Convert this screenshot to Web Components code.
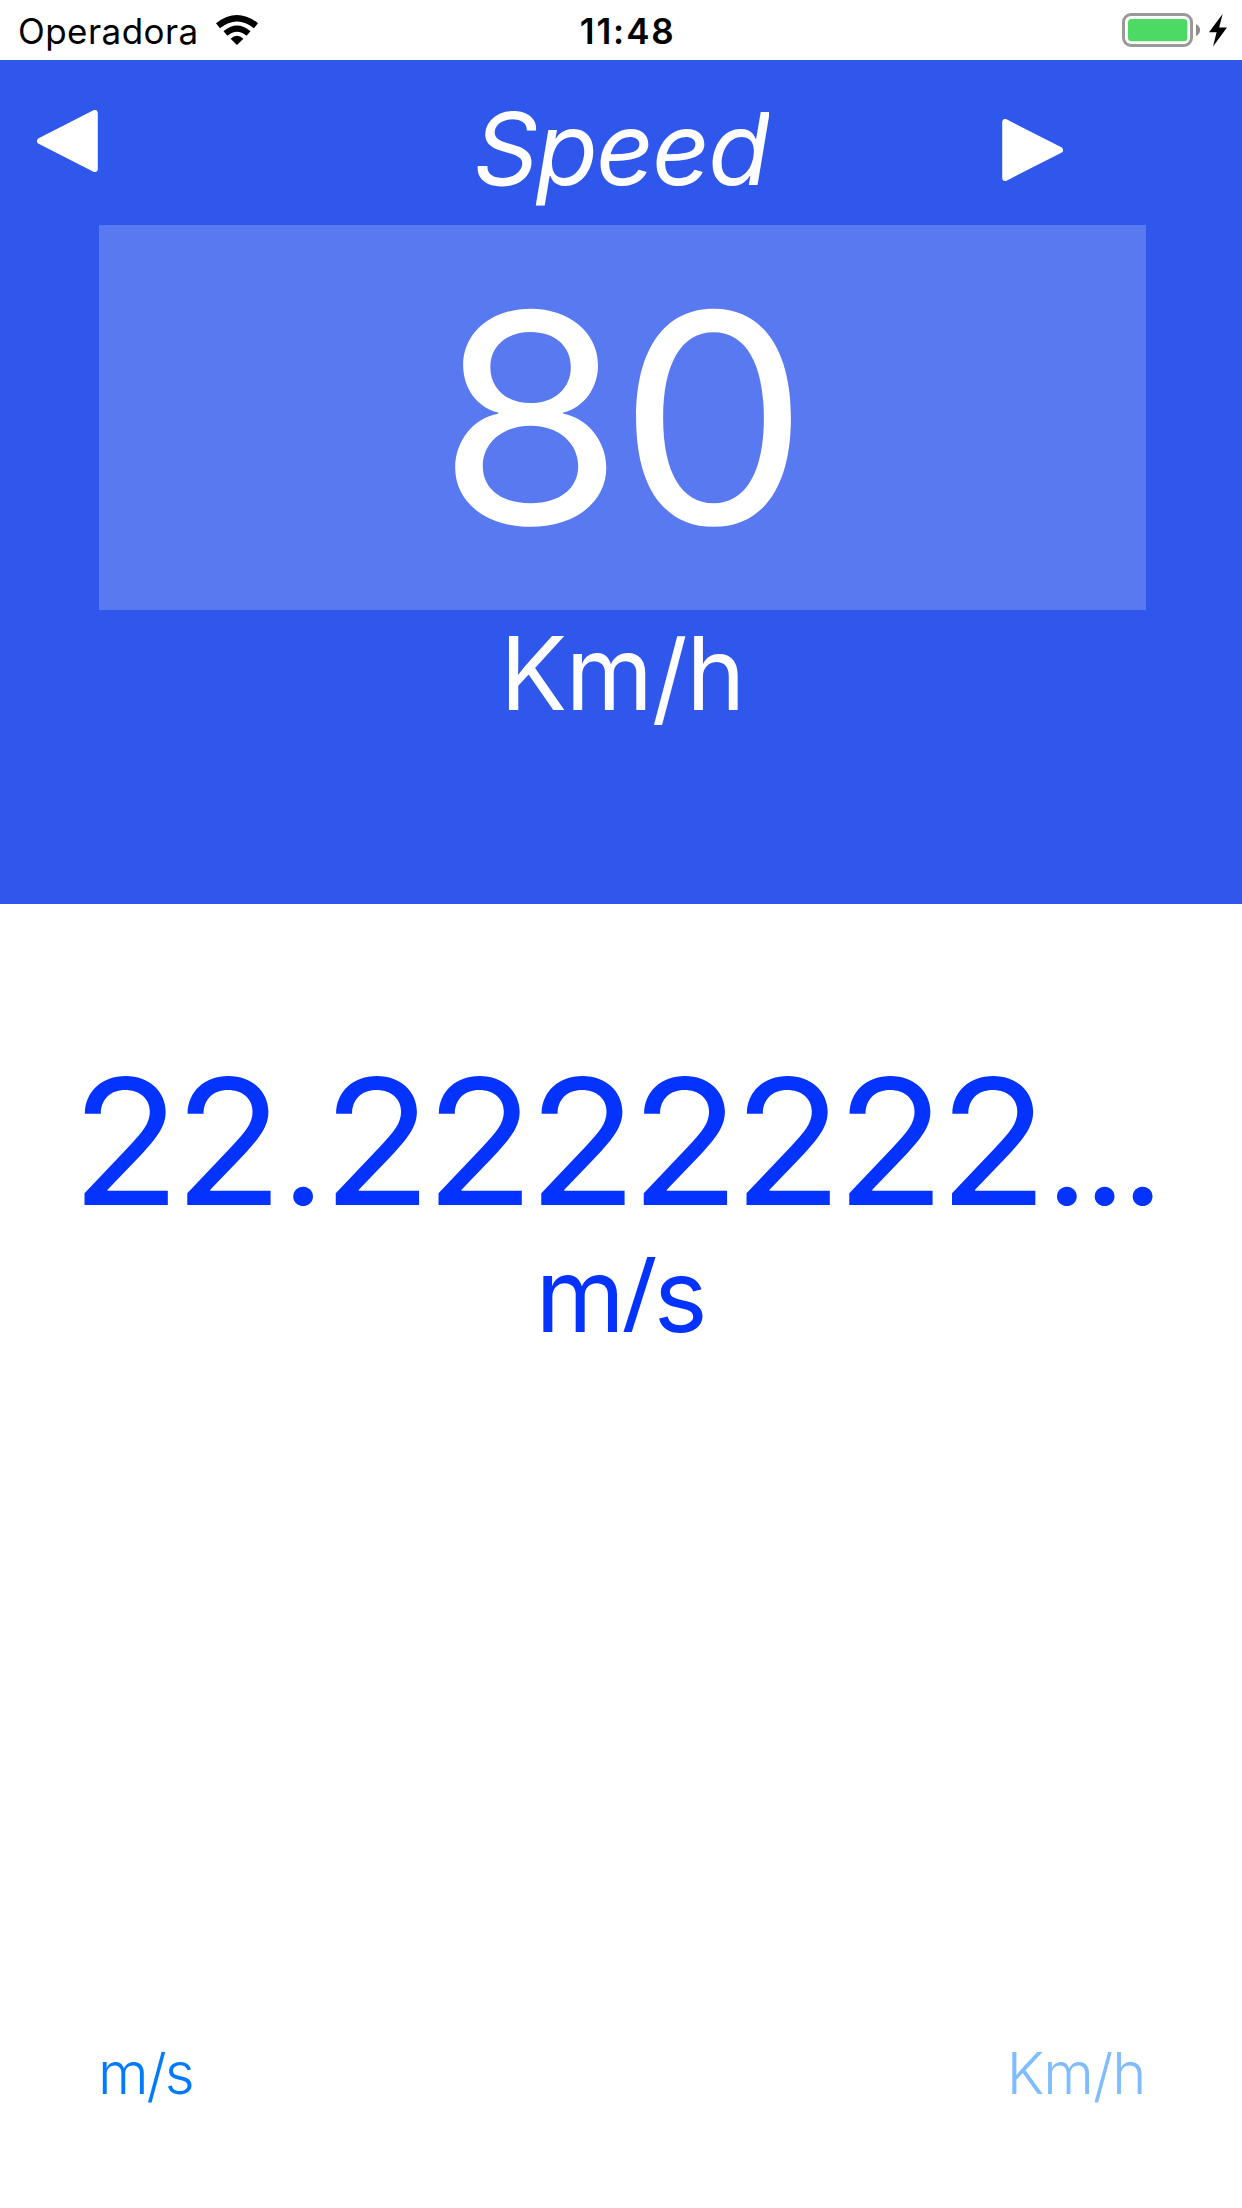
<!DOCTYPE html>
<html lang="pt">
<head>
<meta charset="utf-8">
<title>Speed</title>
<style>
html,body{margin:0;background:#fff}
body{font-family:Inter,"Liberation Sans",sans-serif}
</style>
</head>
<body>
<unit-converter></unit-converter>
<script>
const define=(name,html)=>customElements.define(name,class extends HTMLElement{
  constructor(){super();this.attachShadow({mode:'open'}).innerHTML=html;}
});

define('wifi-icon',`<style>:host{display:block;width:44px;height:32px}svg{display:block}</style>
<svg width="44" height="32" viewBox="0 0 44 32">
<path d="M3 11.7Q22 -3.2 41 11.7" fill="none" stroke="#000" stroke-width="6.4"/>
<path d="M10.5 19.5Q22 9.7 33.5 19.5" fill="none" stroke="#000" stroke-width="6.2"/>
<path d="M15.6 24.8Q22 18.8 28.4 24.8L22 31Z"/></svg>`);

define('battery-icon',`<style>:host{display:block;width:106px;height:36px}svg{display:block}</style>
<svg width="106" height="36" viewBox="0 0 106 36">
<rect x="1.5" y="2.5" width="68" height="31" rx="7.5" fill="#fff" stroke="#999" stroke-width="3"/>
<rect x="6" y="7" width="59.3" height="22.2" rx="3.5" fill="#4cd964"/>
<path d="M74 12Q78 14 78 18T74 24Z" fill="#8c8c8c"/>
<path d="M100.6 2L87 20.2H94.6L91 34.6L105 15.6H97.2Z"/></svg>`);

define('status-bar',`<style>
:host{display:grid;grid-template-columns:1fr auto 1fr;align-items:center;height:60px;box-sizing:border-box;background:#fff;color:#000;font-size:35px;line-height:60px}
.carrier{display:flex;align-items:center;gap:16.3px;padding-left:18px;letter-spacing:.45px}
.text{padding-top:2px;line-height:58px}
.time{font-weight:600;letter-spacing:1.9px;padding:2px 0 0 13.4px;line-height:58px}
battery-icon{justify-self:end;margin:-1px 14px 0 0}
</style>
<div class="carrier"><span class="text"><slot name="carrier"></slot></span><wifi-icon></wifi-icon></div>
<div class="time"><slot name="time"></slot></div>
<battery-icon></battery-icon>`);

define('arrow-icon',`<style>:host{display:block;width:61px;height:62px}:host([next]) svg{transform:scaleX(-1)}svg{display:block}</style>
<svg width="61" height="62" viewBox="0 0 61 62"><path d="M3 31L57.8 3V59Z" fill="#fff" stroke="#fff" stroke-width="6" stroke-linejoin="round"/></svg>`);

define('title-bar',`<style>
:host{display:grid;grid-template-columns:1fr 295px 1fr;height:165px;color:#fff}
.back{margin:50px 0 0 37px}
.next{justify-self:end;margin:59px 179px 0 0}
h1{margin:0;padding-top:13px;font:italic 400 101px/151px Inter,sans-serif;letter-spacing:-2.1px;white-space:nowrap;overflow:hidden;box-sizing:border-box;height:165px}
</style>
<arrow-icon class="back"></arrow-icon><h1><slot></slot></h1><arrow-icon class="next" next></arrow-icon>`);

define('value-field',`<style>
:host{display:flex;justify-content:center;align-items:center;height:385px;margin:0 96px 0 99px;background:#5979f0;color:#fff;font-size:292px;line-height:385px;letter-spacing:-6px}
span{display:block;transform:translate(-2.5px,0) scaleX(1.036)}
</style><span><slot></slot></span>`);

define('unit-label',`<style>
:host{display:block;text-align:center;height:126px;padding-left:2px;font-size:102px;line-height:126px;letter-spacing:-1.2px}
span{display:inline-block;transform:scaleX(.975)}
::slotted(b){font-weight:400;line-height:0;vertical-align:-4px}
</style><span><slot></slot></span>`);

define('source-panel',`<style>
:host{display:block;height:844px;background:#3057ec;color:#fff}
</style><slot></slot>`);

define('result-panel',`<style>
:host{display:block;height:1070px;color:#0433ff;white-space:nowrap}
.value{padding:137px 0 0 71.2px;height:200px;font-size:175px;line-height:200px;letter-spacing:-6.75px}
.line{display:inline-block;transform:scaleX(1.027);transform-origin:0 0}
.dot,.more{font-size:146px;line-height:0}
.dot{letter-spacing:-2.3px;margin-left:5px}
.more{letter-spacing:-5.2px;margin-left:4px}
.unit{text-align:center;padding-left:1px;height:108px;font-size:102px;line-height:108px}
.slash{display:inline-block;font-size:86px;line-height:86px;vertical-align:9.5px;transform:scaleX(1.18);margin:0 -1px}
</style>
<div class="value"><div class="line"><slot name="whole"></slot><span class="dot">.</span><slot name="fraction"></slot><span class="more">...</span></div></div>
<div class="unit">m<span class="slash">/</span>s</div>`);

define('unit-switch',`<style>
:host{display:flex;justify-content:space-between;height:120px;padding:39px 96.4px 0 98px;font-size:58px;font-weight:300;line-height:120px;color:#007aff}
.to{letter-spacing:-2px}
.from{letter-spacing:-.9px;color:#80bdff}
b{font-weight:300;line-height:0;vertical-align:-2px}
</style><span class="to">m<b>/</b>s</span><span class="from">Km<b>/</b>h</span>`);

define('unit-converter',`<style>:host{display:flex;flex-direction:column;width:1242px;height:2208px;overflow:hidden;background:#fff}</style>
<status-bar><span slot="carrier">Operadora</span><span slot="time">11:48</span></status-bar>
<source-panel><title-bar>Speed</title-bar><value-field>80</value-field><unit-label>Km<b>/</b>h</unit-label></source-panel>
<result-panel><span slot="whole">22</span><span slot="fraction">2222222</span></result-panel>
<unit-switch></unit-switch>`);
</script>
</body>
</html>
